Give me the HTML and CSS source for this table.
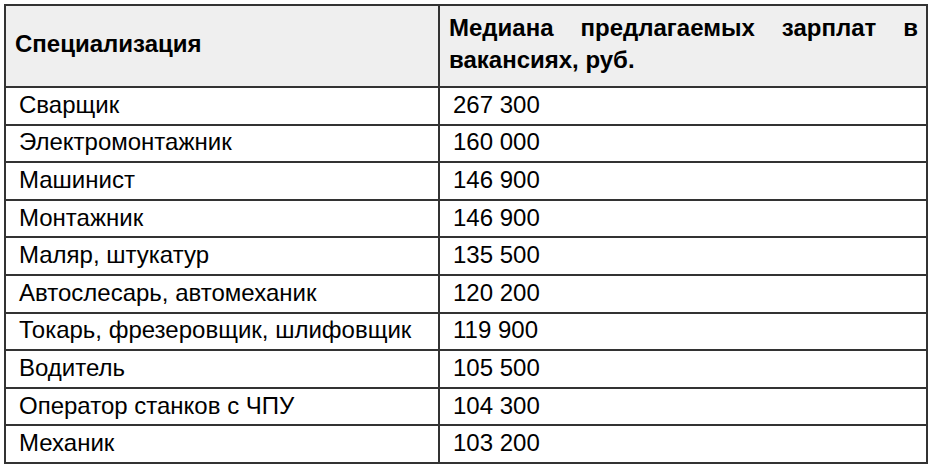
FILE: index.html
```html
<!DOCTYPE html>
<html lang="ru">
<head>
<meta charset="utf-8">
<title>Медиана предлагаемых зарплат</title>
<link rel="stylesheet" href="styles.css">
</head>
<body>
<table class="salary">
  <colgroup><col class="c1"><col class="c2"></colgroup>
  <thead>
    <tr>
      <th class="h1">Специализация</th>
      <th class="h2">Медиана предлагаемых зарплат в вакансиях, руб.</th>
    </tr>
  </thead>
  <tbody>
    <tr><td>Сварщик</td><td>267 300</td></tr>
    <tr><td>Электромонтажник</td><td>160 000</td></tr>
    <tr><td>Машинист</td><td>146 900</td></tr>
    <tr><td>Монтажник</td><td>146 900</td></tr>
    <tr><td>Маляр, штукатур</td><td>135 500</td></tr>
    <tr><td>Автослесарь, автомеханик</td><td>120 200</td></tr>
    <tr><td>Токарь, фрезеровщик, шлифовщик</td><td>119 900</td></tr>
    <tr><td>Водитель</td><td>105 500</td></tr>
    <tr><td>Оператор станков с ЧПУ</td><td>104 300</td></tr>
    <tr><td>Механик</td><td>103 200</td></tr>
  </tbody>
</table>
</body>
</html>
```
FILE: styles.css
```css
html, body { background: #fff; }
body {
  margin: 4px 0 0 4px;
  font-family: "Liberation Sans", Arial, sans-serif;
  color: #000;
}
.salary {
  border-collapse: collapse;
  table-layout: fixed;
  width: 922px;
  font-size: 24px;
}
.c1 { width: 434px; }
.c2 { width: 488px; }
.salary th, .salary td {
  border: 2px solid #333;
  vertical-align: middle;
}
.salary th {
  background: #efefef;
  font-weight: bold;
  text-align: left;
  height: 76px;
  line-height: 32px;
  padding: 0 8px 4px 9px;
}
.salary th.h2 { text-align: justify; }
.salary td {
  height: 33.6px;
  padding: 0 0 2px 13px;
  line-height: 28px;
  box-sizing: content-box;
}
```
